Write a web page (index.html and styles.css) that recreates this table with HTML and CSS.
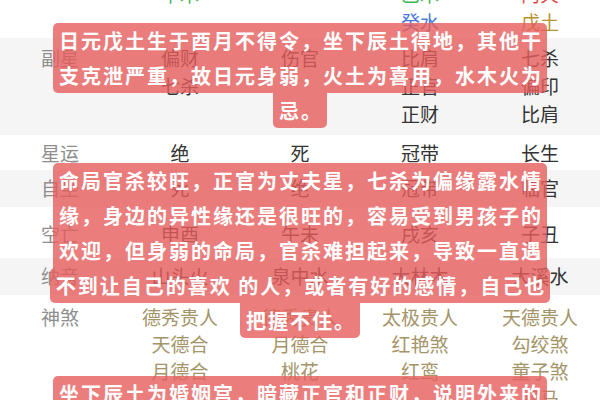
FILE: index.html
```html
<!DOCTYPE html>
<html lang="zh-CN">
<head>
<meta charset="utf-8">
<title>命盘</title>
<link rel="stylesheet" href="styles.css">
</head>
<body>
<div class="page">
  <div class="chart">
    <div class="row row-canggan">
      <div class="label">藏干</div>
      <div class="cell"><span class="shui">壬水</span><span class="mu">甲木</span></div>
      <div class="cell"><span class="jin">辛金</span></div>
      <div class="cell"><span class="tu">戊土</span><span class="mu">乙木</span><span class="shui">癸水</span></div>
      <div class="cell"><span class="mu">甲木</span><span class="huo">丙火</span><span class="tu">戊土</span></div>
    </div>
    <div class="row row-fuxing shade">
      <div class="label">副星</div>
      <div class="cell"><span>偏财</span><span>七杀</span></div>
      <div class="cell"><span>伤官</span></div>
      <div class="cell"><span>比肩</span><span>正官</span><span>正财</span></div>
      <div class="cell"><span>七杀</span><span>偏印</span><span>比肩</span></div>
    </div>
    <div class="row row-xingyun">
      <div class="label">星运</div>
      <div class="cell"><span>绝</span></div>
      <div class="cell"><span>死</span></div>
      <div class="cell"><span>冠带</span></div>
      <div class="cell"><span>长生</span></div>
    </div>
    <div class="row row-zizuo shade">
      <div class="label">自坐</div>
      <div class="cell"><span>死</span></div>
      <div class="cell"><span>绝</span></div>
      <div class="cell"><span>冠带</span></div>
      <div class="cell"><span>临官</span></div>
    </div>
    <div class="row row-kongwang">
      <div class="label">空亡</div>
      <div class="cell"><span>申酉</span></div>
      <div class="cell"><span>午未</span></div>
      <div class="cell"><span>戌亥</span></div>
      <div class="cell"><span>子丑</span></div>
    </div>
    <div class="row row-nayin shade">
      <div class="label">纳音</div>
      <div class="cell"><span>山头火</span></div>
      <div class="cell"><span>泉中水</span></div>
      <div class="cell"><span>大林木</span></div>
      <div class="cell"><span>大溪水</span></div>
    </div>
    <div class="row row-shensha">
      <div class="label">神煞</div>
      <div class="cell gold"><span>德秀贵人</span><span>天德合</span><span>月德合</span></div>
      <div class="cell gold"><span>德秀贵人</span><span>月德合</span><span>桃花</span></div>
      <div class="cell gold"><span>太极贵人</span><span>红艳煞</span><span>红鸾</span></div>
      <div class="cell gold"><span>天德贵人</span><span>勾绞煞</span><span>童子煞</span><span>驿马</span></div>
    </div>
  </div>

  <div class="caption caption-1">
    <span class="cap-line join-below">日元戊土生于酉月不得令，坐下辰土得地，其他干</span>
    <span class="cap-line join-above">支克泄严重，故日元身弱，火土为喜用，水木火为</span>
    <span class="cap-line join-above">忌。</span>
  </div>

  <div class="caption caption-2">
    <span class="cap-line join-below">命局官杀较旺，正官为丈夫星，七杀为偏缘露水情</span>
    <span class="cap-line join-above join-below">缘，身边的异性缘还是很旺的，容易受到男孩子的</span>
    <span class="cap-line join-above join-below">欢迎，但身弱的命局，官杀难担起来，导致一直遇</span>
    <span class="cap-line">不到让自己的喜欢 的人，或者有好的感情，自己也</span>
    <span class="cap-line join-above">把握不住。</span>
  </div>

  <div class="caption caption-3">
    <span class="cap-line join-below">坐下辰土为婚姻宫，暗藏正官和正财，说明外来的</span>
    <span class="cap-line join-above">诱惑比较多，感情容易出现波折。</span>
  </div>
</div>
</body>
</html>
```

FILE: styles.css
```css
html, body {
  margin: 0;
  padding: 0;
  background: #ffffff;
}

body {
  font-family: "Noto Sans CJK SC", "Noto Sans", sans-serif;
  overflow: hidden;
}

.page {
  position: relative;
  width: 600px;
  height: 400px;
  overflow: hidden;
}

.chart {
  margin-top: -54px;
}

.row {
  display: grid;
  grid-template-columns: repeat(5, 120px);
  align-items: start;
  font-size: 19px;
  line-height: 28px;
  color: #333333;
}

.row.shade {
  background: #f5f5f5;
}

.label {
  text-align: center;
  color: #8e8e8e;
}

.cell {
  display: flex;
  flex-direction: column;
  align-items: center;
}

.row-canggan { padding: 6px 0 2px; }
.row-fuxing { padding: 6px 0 7px; }
.row-xingyun { padding: 4px 0 3px; }
.row-zizuo { padding: 4px 0 5px; }
.row-kongwang { padding: 13px 0 10px; }
.row-nayin { padding: 4px 0 5px; }
.row-shensha { padding: 8px 0 0; line-height: 27px; }

.mu { color: #3fb65a; }
.shui { color: #4a78dc; }
.tu { color: #b8922a; }
.huo { color: #e04848; }
.jin { color: #d99a1c; }

.gold { color: #a49468; }

/* overlay captions */
.caption {
  position: absolute;
  left: 0;
  right: 0;
  display: flex;
  flex-direction: column;
  align-items: center;
}

.caption-1 { top: 23px; }
.caption-2 { top: 163px; }
.caption-3 { top: 376px; }

.cap-line {
  display: block;
  height: 35px;
  line-height: 35px;
  padding: 0 4px 0 6px;
  background: rgba(230, 92, 92, 0.8);
  color: #ffffff;
  font-size: 20px;
  font-weight: 700;
  letter-spacing: 2px;
  white-space: pre;
  border-radius: 5px;
}

.cap-line.join-below {
  border-bottom-left-radius: 0;
  border-bottom-right-radius: 0;
}

.cap-line.join-above {
  border-top-left-radius: 0;
  border-top-right-radius: 0;
}
```
